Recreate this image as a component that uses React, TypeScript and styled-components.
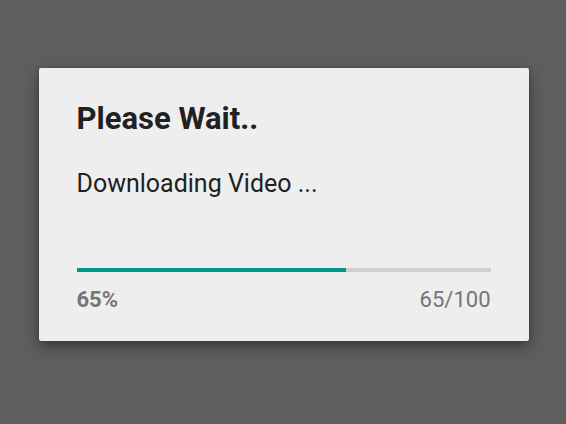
import styled, { createGlobalStyle } from 'styled-components';

const GlobalStyle = createGlobalStyle`
  html, body {
    margin: 0;
    height: 100%;
    background: #5f5f5f;
  }
  #root {
    height: 100%;
  }
`;

const Screen = styled.div`
  height: 424px;
  display: flex;
  align-items: flex-start;
  justify-content: center;
  padding-top: 68px;
  box-sizing: border-box;
  font-family: Roboto, 'Liberation Sans', sans-serif;
`;

const Dialog = styled.div`
  width: 490px;
  height: 273px;
  margin-left: 1px;
  box-sizing: border-box;
  padding: 33px 38px 0 38px;
  background: #eeeeee;
  border-radius: 2px;
  box-shadow: 0 6px 18px rgba(0, 0, 0, 0.35), 0 2px 6px rgba(0, 0, 0, 0.2);
  display: flex;
  flex-direction: column;
`;

const Title = styled.h1`
  margin: 0;
  font-size: 31px;
  font-weight: 700;
  line-height: 36px;
  color: #212121;
`;

const Message = styled.p`
  margin: 32px 0 0;
  font-size: 25px;
  line-height: 30px;
  color: #212121;
`;

const Track = styled.div`
  margin-top: 69px;
  height: 4px;
  background: #cfcfcf;
`;

const Fill = styled.div`
  height: 100%;
  background: #009688;
`;

const Footer = styled.div`
  display: flex;
  justify-content: space-between;
  margin-top: 15px;
  font-size: 22px;
  line-height: 26px;
  color: #757575;
`;

const Percent = styled.span`
  font-weight: 700;
`;

const Count = styled.span``;

export default function App() {
  const progress = 65;
  const max = 100;
  return (
    <>
      <GlobalStyle />
      <Screen>
        <Dialog>
          <Title>Please Wait..</Title>
          <Message>Downloading Video ...</Message>
          <Track>
            <Fill style={{ width: `${(progress / max) * 100}%` }} />
          </Track>
          <Footer>
            <Percent>{progress}%</Percent>
            <Count>
              {progress}/{max}
            </Count>
          </Footer>
        </Dialog>
      </Screen>
    </>
  );
}
